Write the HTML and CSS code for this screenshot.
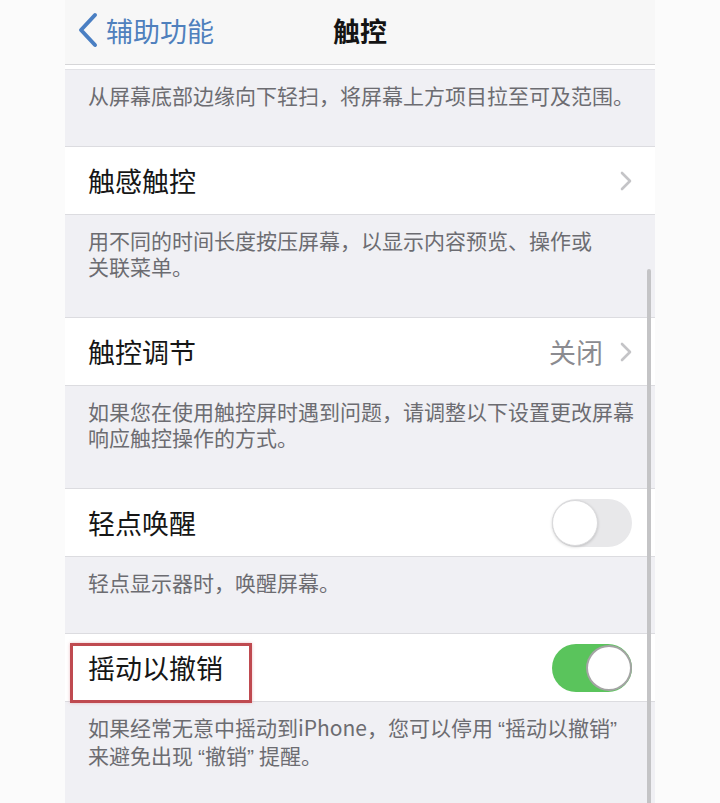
FILE: index.html
```html
<!DOCTYPE html>
<html lang="zh-CN">
<head>
<meta charset="utf-8">
<title>触控</title>
<link rel="stylesheet" href="styles.css">
</head>
<body>
<div class="screen">
  <header class="nav">
    <div class="back">
      <svg class="back-chev" width="22" height="36" viewBox="0 0 22 36"><polyline points="18,3 4,18 18,33" fill="none" stroke="#4a7fc3" stroke-width="4" stroke-linecap="round" stroke-linejoin="round"/></svg>
      <span class="back-text">辅助功能</span>
    </div>
    <div class="title">触控</div>
    <div></div>
  </header>
  <div class="strip"></div>

  <p class="footer">从屏幕底部边缘向下轻扫，将屏幕上方项目拉至可及范围。</p>

  <div class="cell">
    <span class="label">触感触控</span>
    <span class="accessory">
      <svg class="chev" width="14" height="22" viewBox="0 0 14 22"><polyline points="3,3 11,11 3,19" fill="none" stroke="#c4c4c7" stroke-width="2.6" stroke-linecap="round" stroke-linejoin="round"/></svg>
    </span>
  </div>
  <p class="footer">用不同的时间长度按压屏幕，以显示内容预览、操作或<br>关联菜单。</p>

  <div class="cell">
    <span class="label">触控调节</span>
    <span class="accessory">
      <span class="value">关闭</span>
      <svg class="chev" width="14" height="22" viewBox="0 0 14 22"><polyline points="3,3 11,11 3,19" fill="none" stroke="#c4c4c7" stroke-width="2.6" stroke-linecap="round" stroke-linejoin="round"/></svg>
    </span>
  </div>
  <p class="footer">如果您在使用触控屏时遇到问题，请调整以下设置更改屏幕<br>响应触控操作的方式。</p>

  <div class="cell">
    <span class="label">轻点唤醒</span>
    <span class="toggle off"><span class="knob"></span></span>
  </div>
  <p class="footer">轻点显示器时，唤醒屏幕。</p>

  <div class="cell">
    <span class="label">摇动以撤销</span>
    <span class="toggle on"><span class="knob"></span></span>
    <span class="mark"></span>
  </div>
  <p class="footer">如果经常无意中摇动到iPhone，您可以停用<span class="q q-open">“</span>摇动以撤销<span class="q q-close">”</span><br>来避免出现<span class="q q-open">“</span>撤销<span class="q q-close">”</span>提醒。</p>

  <div class="scrollbar"></div>
</div>
</body>
</html>
```

FILE: styles.css
```css
html, body {
  margin: 0;
  padding: 0;
}
body {
  background: #fbfbfb;
  font-family: "Noto Sans CJK SC", "Noto Sans", sans-serif;
  height: 803px;
  overflow: hidden;
}
.screen {
  position: relative;
  margin-left: 65px;
  width: 590px;
  height: 803px;
  background: #f0f0f4;
  overflow: hidden;
}
.nav {
  box-sizing: border-box;
  height: 65px;
  padding-bottom: 4px;
  background: #f7f7f7;
  border-bottom: 1px solid #d6d6d8;
  display: grid;
  grid-template-columns: 1fr auto 1fr;
  align-items: center;
}
.back {
  display: flex;
  align-items: center;
  padding-left: 12px;
  gap: 7px;
}
.back-chev {
  display: block;
}
.back-text {
  font-size: 27px;
  color: #4f80bd;
  line-height: 1;
}
.title {
  font-size: 27px;
  font-weight: 700;
  color: #141414;
  line-height: 1;
}
.strip {
  height: 4px;
  background: #ffffff;
  border-bottom: 1px solid #e2e2e6;
}
.footer {
  margin: 0;
  padding: 12px 10px 38px 23px;
  font-size: 21px;
  line-height: 26px;
  color: #6c6c71;
  white-space: nowrap;
}
.q {
  font-family: "Liberation Sans", sans-serif;
}
.q-open {
  padding-left: 5px;
}
.q-close {
  padding-right: 5px;
}
.cell {
  position: relative;
  box-sizing: border-box;
  height: 69px;
  background: #ffffff;
  border-top: 1px solid #dcdce0;
  border-bottom: 1px solid #dcdce0;
  display: flex;
  align-items: center;
  justify-content: space-between;
  padding: 0 23px;
}
.label {
  font-size: 27px;
  color: #161616;
  line-height: 1;
}
.accessory {
  display: flex;
  align-items: center;
  gap: 16px;
  margin-right: -1px;
}
.value {
  font-size: 27px;
  color: #8b8b90;
  line-height: 1;
}
.chev {
  display: block;
}
.toggle {
  position: relative;
  box-sizing: border-box;
  width: 80px;
  height: 48px;
  border-radius: 24px;
  display: block;
}
.toggle.off {
  background: #e8e8ea;
}
.toggle.on {
  background: #5ac45c;
}
.knob {
  position: absolute;
  top: 1px;
  width: 46px;
  height: 46px;
  box-sizing: border-box;
  border-radius: 50%;
  background: #ffffff;
}
.toggle.off .knob {
  left: 0;
  border: 1px solid #dadadc;
  box-shadow: 0 1px 3px rgba(0, 0, 0, 0.18);
}
.toggle.on .knob {
  right: 0;
  border: 2px solid rgba(90, 90, 90, 0.55);
}
.mark {
  position: absolute;
  left: 5px;
  top: 9px;
  width: 182px;
  height: 60px;
  box-sizing: border-box;
  border: 3px solid #bf4a50;
  box-shadow: 0 0 3px rgba(220, 130, 140, 0.5);
}
.scrollbar {
  position: absolute;
  right: 4px;
  top: 269px;
  bottom: 0;
  width: 4px;
  border-radius: 2px 2px 0 0;
  background: #c4c4c6;
}
```
